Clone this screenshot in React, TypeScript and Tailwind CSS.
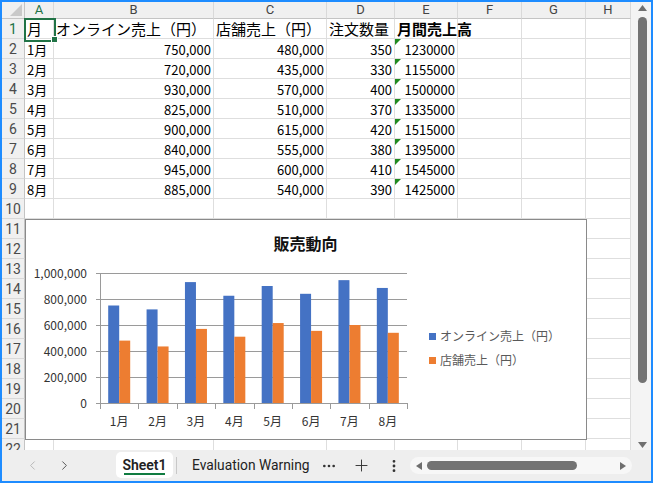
import React from 'react';
import { ChevronLeft, ChevronRight, Plus, MoreHorizontal, EllipsisVertical } from 'lucide-react';

const LETTERS = ['A', 'B', 'C', 'D', 'E', 'F', 'G', 'H'];
const months = ['1月', '2月', '3月', '4月', '5月', '6月', '7月', '8月'];
const online = [750000, 720000, 930000, 825000, 900000, 840000, 945000, 885000];
const store = [480000, 435000, 570000, 510000, 615000, 555000, 600000, 540000];
const orders = [350, 330, 400, 370, 420, 380, 410, 390];
const totals = ['1230000', '1155000', '1500000', '1335000', '1515000', '1395000', '1545000', '1425000'];

const fmt = (n: number) => n.toLocaleString('en-US');

type Cell = { text: string; align: 'left' | 'right'; bold?: boolean; tri?: boolean; big?: boolean };

function rowCells(r: number): Cell[] {
  if (r === 1) {
    return [
      { text: '月', align: 'left', big: true },
      { text: 'オンライン売上（円）', align: 'left', big: true },
      { text: '店舗売上（円）', align: 'left', big: true },
      { text: '注文数量', align: 'left', big: true },
      { text: '月間売上高', align: 'left', big: true, bold: true },
      { text: '', align: 'left' },
      { text: '', align: 'left' },
      { text: '', align: 'left' },
    ];
  }
  if (r >= 2 && r <= 9) {
    const i = r - 2;
    return [
      { text: months[i], align: 'left' },
      { text: fmt(online[i]), align: 'right' },
      { text: fmt(store[i]), align: 'right' },
      { text: String(orders[i]), align: 'right' },
      { text: totals[i], align: 'right', tri: true },
      { text: '', align: 'left' },
      { text: '', align: 'left' },
      { text: '', align: 'left' },
    ];
  }
  return Array.from({ length: 8 }, () => ({ text: '', align: 'left' as const }));
}

function Chart() {
  const x0 = 100;
  const cw = 38.375;
  const yBase = 403;
  const scale = 130 / 1000000;
  const grid = [
    { y: 273, label: '1,000,000' },
    { y: 299, label: '800,000' },
    { y: 325, label: '600,000' },
    { y: 351, label: '400,000' },
    { y: 377, label: '200,000' },
    { y: 403, label: '0' },
  ];
  return (
    <div className="absolute left-[23px] top-[217px] w-[562px] h-[221px] border border-[#8a8a8a] bg-white z-20">
      <svg width="560" height="219" className="block">
        <g transform="translate(-26 -220)" fontFamily="'Noto Sans CJK JP', sans-serif">
          <text x="305.5" y="250" fontSize="16" fontWeight="700" textAnchor="middle" fill="#111">
            販売動向
          </text>
          {grid.map((g) => (
            <g key={g.y}>
              <line x1="96" x2="407" y1={g.y + 0.5} y2={g.y + 0.5} stroke="#9a9a9a" strokeWidth="1" />
              <text x="87" y={g.y + 5} fontSize="12" textAnchor="end" fill="#333">
                {g.label}
              </text>
            </g>
          ))}
          <line x1="100.5" x2="100.5" y1="273" y2="403.5" stroke="#9a9a9a" strokeWidth="1" />
          {Array.from({ length: 9 }, (_, i) => (
            <line
              key={i}
              x1={Math.round(x0 + i * cw) + 0.5}
              x2={Math.round(x0 + i * cw) + 0.5}
              y1="403"
              y2="409"
              stroke="#9a9a9a"
              strokeWidth="1"
            />
          ))}
          {months.map((m, i) => {
            const bx = x0 + i * cw + 8.2;
            const h1 = online[i] * scale;
            const h2 = store[i] * scale;
            return (
              <g key={m}>
                <rect x={bx} y={yBase - h1} width="11" height={h1} fill="#4472c4" />
                <rect x={bx + 11} y={yBase - h2} width="11" height={h2} fill="#ed7d31" />
                <text x={x0 + (i + 0.5) * cw} y="426" fontSize="12" textAnchor="middle" fill="#333">
                  {m}
                </text>
              </g>
            );
          })}
          <rect x="429" y="333" width="7" height="7" fill="#4472c4" />
          <text x="440" y="341" fontSize="12" fill="#595959">
            オンライン売上（円）
          </text>
          <rect x="429" y="357" width="7" height="7" fill="#ed7d31" />
          <text x="440" y="365" fontSize="12" fill="#595959">
            店舗売上（円）
          </text>
        </g>
      </svg>
    </div>
  );
}

export default function App() {
  const rows = Array.from({ length: 22 }, (_, i) => i + 1);
  return (
    <div className="w-[653px] h-[483px] border-2 border-[#1e8cff] bg-[#eeeeee] flex flex-col overflow-hidden">
      <div className="flex h-[448px]">
        <div className="relative w-[629px] h-[448px] overflow-hidden bg-white">
          <div className="grid grid-cols-[23px_29px_160px_113px_68px_63px_64px_64px_45px] grid-rows-[17px_repeat(22,20px)]">
            <div className="bg-[#f0f0f0] border-r border-b border-[#c4c4c4] relative">
              <svg width="12" height="12" className="absolute right-[2px] bottom-[2px]">
                <polygon points="12,0 12,12 0,12" fill="#c9c9c9" />
              </svg>
            </div>
            {LETTERS.map((l, i) => (
              <div
                key={l}
                className={`bg-[#f0f0f0] border-r border-b border-r-[#d9d9d9] border-b-[#c4c4c4] flex items-center justify-center text-[13px] font-['Roboto',sans-serif] ${
                  i === 0 ? 'text-[#217346] bg-[#e6e6e6]' : 'text-[#444]'
                }`}
              >
                {l}
              </div>
            ))}
            {rows.map((r) => (
              <React.Fragment key={r}>
                <div
                  className={`bg-[#f0f0f0] border-r border-b border-r-[#c4c4c4] border-b-[#d9d9d9] flex items-center justify-center pt-[1px] text-[14px] font-['Roboto',sans-serif] ${
                    r === 1 ? 'text-[#217346] bg-[#e6e6e6]' : 'text-[#4a4a4a]'
                  }`}
                >
                  {r}
                </div>
                {rowCells(r).map((c, ci) => (
                  <div
                    key={ci}
                    className={`relative border-r border-b border-[#dedede] flex items-center pt-[2px] px-[2px] whitespace-nowrap text-black font-['Noto_Sans_CJK_JP',sans-serif] ${
                      c.big ? 'text-[15px]' : 'text-[13px]'
                    } ${c.bold ? 'font-bold' : ''} ${c.align === 'right' ? 'justify-end' : 'justify-start'}`}
                  >
                    {c.tri && (
                      <svg width="6" height="6" className="absolute left-0 top-0">
                        <polygon points="0,0 6,0 0,6" fill="#1f8a1f" />
                      </svg>
                    )}
                    <span className="relative z-10">{c.text}</span>
                  </div>
                ))}
              </React.Fragment>
            ))}
          </div>
          <div className="absolute left-[22px] top-[16px] w-[32px] h-[24px] border-2 border-[#217346] z-10" />
          <div className="absolute left-[49px] top-[34px] w-[7px] h-[7px] bg-[#217346] border border-white z-10" />
          <Chart />
        </div>
        <div className="w-[20px] h-[448px] bg-[#f4f4f4] flex flex-col items-center pl-[3px]">
          <svg width="9" height="6" className="mt-[3px]">
            <polygon points="4.5,0 9,6 0,6" fill="#707070" />
          </svg>
          <div className="mt-[6px] w-[9px] h-[366px] rounded-full bg-[#737373]" />
          <svg width="9" height="6" className="mt-auto mb-[2px]">
            <polygon points="0,0 9,0 4.5,6" fill="#707070" />
          </svg>
        </div>
      </div>
      <div className="h-[31px] flex items-center bg-[#eeeeee] font-['Roboto',sans-serif]">
        <div className="w-[14px]" />
        <div className="w-[32px] flex justify-center text-[#b0b0b0]">
          <ChevronLeft size={15} strokeWidth={1.4} />
        </div>
        <div className="w-[32px] flex justify-center text-[#444]">
          <ChevronRight size={15} strokeWidth={1.4} />
        </div>
        <div className="ml-[36px] self-start mt-[2px] w-[57px] h-[26px] bg-white rounded-[5px] relative flex justify-center pt-[3px]">
          <span className="text-[14px] font-semibold text-[#222] leading-[20px]">Sheet1</span>
          <div className="absolute left-[8px] top-[21px] w-[41px] h-[2px] bg-[#107c41]" />
        </div>
        <div className="ml-[3px] w-[1px] h-[17px] bg-[#c8c8c8]" />
        <div className="ml-[15px] w-[118px] text-[13.8px] text-[#222] whitespace-nowrap">Evaluation Warning</div>
        <div className="ml-[11px] text-[#333]">
          <MoreHorizontal size={16} strokeWidth={2} />
        </div>
        <div className="ml-[15px] text-[#333]">
          <Plus size={19} strokeWidth={1.2} />
        </div>
        <div className="ml-[15px] text-[#333]">
          <EllipsisVertical size={16} strokeWidth={2.2} />
        </div>
        <div className="ml-[8px] w-[222px] h-[17px] rounded-full bg-[#f7f7f7] flex items-center px-[6px]">
          <svg width="6" height="8">
            <polygon points="6,0 6,8 0,4" fill="#6e6e6e" />
          </svg>
          <div className="ml-[5px] w-[150px] h-[9px] rounded-full bg-[#737373]" />
          <div className="flex-1" />
          <svg width="6" height="8">
            <polygon points="0,0 6,4 0,8" fill="#6e6e6e" />
          </svg>
        </div>
      </div>
    </div>
  );
}
